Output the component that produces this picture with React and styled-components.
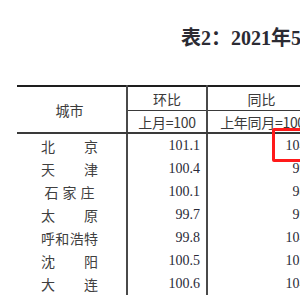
import styled, { createGlobalStyle } from "styled-components";

const GlobalStyle = createGlobalStyle`
    body {
        margin: 0;
        background: #ffffff;
        overflow: hidden;
        font-family: "Liberation Serif", "Noto Sans CJK SC", serif;
    }
`

const StyledPage = styled.div`
    width: 300px;
    height: 300px;
    overflow: hidden;
    padding-top: 28px;
    box-sizing: border-box;
`
const StyledTitle = styled.h1`
    margin: 0 0 0 181px;
    font-family: "Liberation Serif", "Noto Sans CJK SC", serif;
    font-size: 20px;
    line-height: 20px;
    font-weight: bold;
    color: #2b2b33;
    white-space: nowrap;
`
const StyledTable = styled.table`
    margin: 37px 0 0 17px;
    border-collapse: collapse;
    table-layout: fixed;
    width: 306px;
    border-top: 2px solid #1e1e1e;
`
const StyledHeadCell = styled.th`
    height: ${(props) => props.$h}px;
    padding: 0 ${(props) => props.$pr || 0}px 0 0;
    font-family: "Noto Sans CJK SC", sans-serif;
    font-weight: normal;
    font-size: 14px;
    line-height: 14px;
    color: #3a3a3a;
    text-align: center;
    white-space: nowrap;
    overflow: hidden;
    border-left: ${(props) => (props.$first ? "none" : "2px solid #4a4a4a")};
    border-bottom: ${(props) => props.$bottom};
`
const StyledSub = styled.span`
    letter-spacing: -0.3px;
`
const StyledCityCell = styled.td`
    height: 23px;
    padding: 0 28px 0 24px;
`
const StyledCity = styled.div`
    display: flex;
    justify-content: ${(props) => (props.$spread ? "space-between" : "center")};
    font-family: "Noto Sans CJK SC", sans-serif;
    font-size: 14px;
    line-height: 14px;
    color: #404040;
`
const StyledNumCell = styled.td`
    position: relative;
    height: 23px;
    padding: 0 6px 0 0;
    text-align: right;
    font-family: "Liberation Serif", serif;
    font-size: 14px;
    color: #2a2a38;
    border-left: 2px solid #4a4a4a;
`
const StyledMark = styled.span`
    position: absolute;
    left: 64px;
    top: -6px;
    width: 70px;
    height: 28px;
    border: 3px solid #ff1a1a;
    border-radius: 2px;
`

const rows = [
    { city: "北京", mom: "101.1", yoy: "104.9", mark: true },
    { city: "天津", mom: "100.4", yoy: "99.8" },
    { city: "石家庄", mom: "100.1", yoy: "98.9", tight: true },
    { city: "太原", mom: "99.7", yoy: "99.4" },
    { city: "呼和浩特", mom: "99.8", yoy: "104.2" },
    { city: "沈阳", mom: "100.5", yoy: "103.6" },
    { city: "大连", mom: "100.6", yoy: "104.4" },
]

function CityName({ name, tight }) {
    return (
        <StyledCity $spread={!tight}>
            {name.split("").map((ch, i) => (
                <span key={i} style={tight ? { margin: "0 2px" } : undefined}>{ch}</span>
            ))}
        </StyledCity>
    )
}

function App() {
    return (
        <StyledPage>
            <GlobalStyle />
            <StyledTitle>表2：2021年5月70个大中城市新建商品住宅销售价格指数</StyledTitle>
            <StyledTable>
                <colgroup>
                    <col style={{ width: 110 }} />
                    <col style={{ width: 80 }} />
                    <col style={{ width: 116 }} />
                </colgroup>
                <thead>
                    <tr>
                        <StyledHeadCell rowSpan={2} $first $h={23} $pr={4} $bottom="2px solid #3a3a3a">
                            城市
                        </StyledHeadCell>
                        <StyledHeadCell $h={23} $bottom="1px solid #3a3a3a">环比</StyledHeadCell>
                        <StyledHeadCell $h={23} $pr={8} $bottom="1px solid #3a3a3a">同比</StyledHeadCell>
                    </tr>
                    <tr>
                        <StyledHeadCell $h={21} $bottom="2px solid #3a3a3a"><StyledSub>上月=100</StyledSub></StyledHeadCell>
                        <StyledHeadCell $h={21} $pr={6} $bottom="2px solid #3a3a3a"><StyledSub>上年同月=100</StyledSub></StyledHeadCell>
                    </tr>
                </thead>
                <tbody>
                    {rows.map((r) => (
                        <tr key={r.city}>
                            <StyledCityCell>
                                <CityName name={r.city} tight={r.tight} />
                            </StyledCityCell>
                            <StyledNumCell>{r.mom}</StyledNumCell>
                            <StyledNumCell>
                                {r.yoy}
                                {r.mark && <StyledMark />}
                            </StyledNumCell>
                        </tr>
                    ))}
                </tbody>
            </StyledTable>
        </StyledPage>
    )
}

export default App;
